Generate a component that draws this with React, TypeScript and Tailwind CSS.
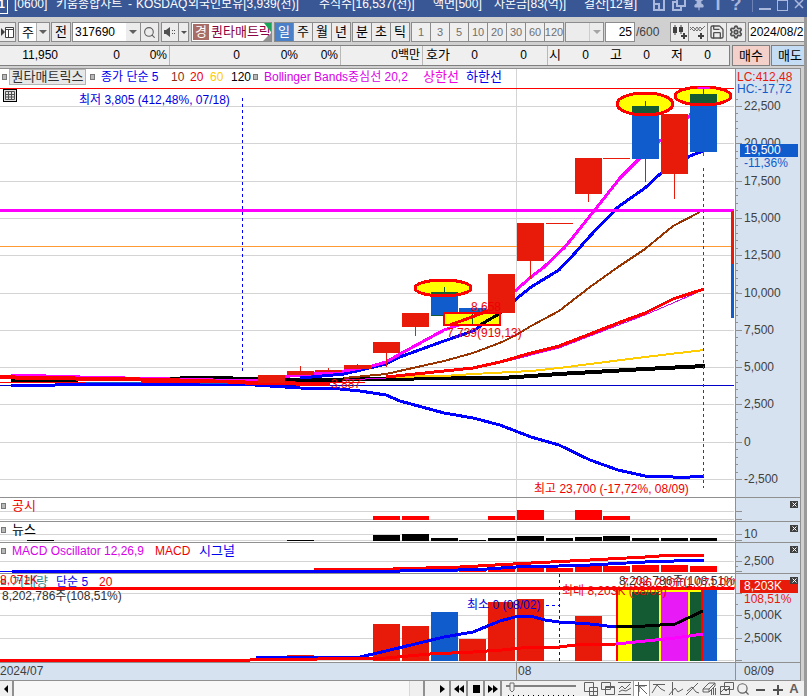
import type { ReactNode } from "react";
import { Search, Save, Settings, Pin } from "lucide-react";

type Point = [number, number];

interface Bar {
  x: number;
  top: number;
  bottom: number;
  color: string;
}

interface Label {
  x: number;
  y: number;
  text: string;
  className: string;
}

interface Tick {
  y: number;
  text?: string;
}

const CHART_WIDTH = 735;
const BAR_WIDTH = 27;
const RED = "#e81a0a";
const BLUE = "#115ccc";
const GREEN = "#145a32";

const toPath = (points: Point[]) => points.map(([x, y]) => `${x},${y}`).join(" ");

const Line = ({ points, color, width = 3 }: { points: Point[]; color: string; width?: number }) => (
  <polyline points={toPath(points)} fill="none" stroke={color} strokeWidth={width} />
);

const Bars = ({ bars }: { bars: Bar[] }) => (
  <>
    {bars.map((b) => (
      <rect key={`${b.x}-${b.top}`} x={b.x} y={b.top} width={BAR_WIDTH} height={b.bottom - b.top} fill={b.color} />
    ))}
  </>
);

const Square = () => <span className="h-[6px] w-[5px] shrink-0 border border-[#777777] bg-[#b8b8b8]" />;

const Down = () => (
  <svg className="pointer-events-none h-1 w-2" viewBox="0 0 8 4">
    <path d="M0 0h8L4 4z" fill="#606060" />
  </svg>
);

interface PanelProps {
  top: number;
  bottom: number;
  grid: number[];
  ticks: Tick[];
  minor?: number[];
  labels?: Label[];
  header?: ReactNode;
  axis?: ReactNode;
  closable?: boolean;
  children: ReactNode;
}

// One horizontal band of the chart: plot on the left, value axis on the right
const Panel = ({ top, bottom, grid, ticks, minor = [], labels = [], header, axis, closable, children }: PanelProps) => {
  const height = bottom - top;
  return (
    <section className="flex border-b border-[#909090]">
      <div className="relative min-w-0 flex-1 overflow-hidden bg-white">
        <svg
          className="block w-full"
          height={height}
          viewBox={`0 ${top} ${CHART_WIDTH} ${height}`}
          preserveAspectRatio="none"
          shapeRendering="crispEdges"
        >
          {grid.map((y) => (
            <path key={y} d={`M0 ${y + 0.5}H734`} stroke="#d4d4d4" />
          ))}
          <path d={`M516.5 ${top}V${bottom}`} stroke="#d4d4d4" />
          {children}
        </svg>
        {header && <div className="absolute top-0 left-0 flex h-4 items-center whitespace-nowrap">{header}</div>}
        {labels.map((l) => (
          <span
            key={l.text + l.x}
            className={`absolute leading-3 whitespace-nowrap ${l.className}`}
            style={{ left: `${(l.x / CHART_WIDTH) * 100}%`, top: l.y - top }}
          >
            {l.text}
          </span>
        ))}
      </div>
      <div className="relative w-[66px] shrink-0 overflow-hidden border-x border-[#909090] bg-[#d6e2f0] text-[#404040]">
        <svg className="block w-full" height={height} viewBox={`0 ${top} 64 ${height}`} shapeRendering="crispEdges">
          {ticks.map((t) => (
            <path key={t.y} d={`M0 ${t.y + 0.5}h6`} stroke="#909090" />
          ))}
          {minor.map((y) => (
            <path key={y} d={`M0 ${y + 0.5}h2`} stroke="#909090" />
          ))}
        </svg>
        {ticks.map((t) =>
          t.text ? (
            <span key={t.y} className="absolute left-2 leading-3" style={{ top: t.y - top - 6 }}>
              {t.text}
            </span>
          ) : null
        )}
        {axis}
        {closable && (
          <button
            type="button"
            aria-label="닫기"
            className="absolute top-[3px] right-[2px] flex h-[7px] w-2 items-center justify-center bg-[#404040]"
          >
            <svg className="h-[5px] w-[5px]" viewBox="0 0 5 5">
              <path d="M0.5 0.5l4 4M4.5 0.5l-4 4" stroke="#ffffff" />
            </svg>
          </button>
        )}
      </div>
    </section>
  );
};

const priceTicks: Tick[] = [
  { y: 106, text: "22,500" },
  { y: 143, text: "20,000" },
  { y: 181, text: "17,500" },
  { y: 218, text: "15,000" },
  { y: 255, text: "12,500" },
  { y: 293, text: "10,000" },
  { y: 330, text: "7,500" },
  { y: 367, text: "5,000" },
  { y: 404, text: "2,500" },
  { y: 442, text: "0" },
  { y: 479, text: "-2,500" },
];

const priceMinor = Array.from({ length: 52 }, (_, i) => Math.round(98.5 + i * 7.46));

const candles: (Bar & { wick?: Point })[] = [
  { x: 258, top: 375, bottom: 383, color: RED },
  { x: 287, top: 371, bottom: 375, color: RED, wick: [366, 375] },
  { x: 315, top: 370, bottom: 372, color: RED, wick: [368, 372] },
  { x: 344, top: 365, bottom: 369, color: RED, wick: [364, 369] },
  { x: 373, top: 342, bottom: 353, color: RED, wick: [342, 367] },
  { x: 402, top: 313, bottom: 327, color: RED, wick: [313, 336] },
  { x: 431, top: 292, bottom: 316, color: BLUE, wick: [286, 316] },
  { x: 459, top: 308, bottom: 313, color: BLUE },
  { x: 488, top: 274, bottom: 313, color: RED },
  { x: 517, top: 223, bottom: 261, color: RED, wick: [223, 279] },
  { x: 546, top: 223, bottom: 224, color: RED },
  { x: 575, top: 158, bottom: 194, color: RED, wick: [158, 202] },
  { x: 603, top: 158, bottom: 159, color: RED },
  { x: 632, top: 106, bottom: 159, color: BLUE, wick: [104, 182] },
  { x: 661, top: 114, bottom: 174, color: RED, wick: [114, 199] },
  { x: 690, top: 94, bottom: 152, color: BLUE, wick: [88, 156] },
];

const upperBand: Point[] = [[11, 375], [80, 377], [170, 379], [256, 381], [270, 378], [300, 375], [344, 371], [372, 366], [386, 362], [400, 354], [444, 330], [459, 325], [488, 311], [515, 291], [531, 277], [544, 267], [565, 247], [590, 216], [598, 206], [620, 178], [645, 153], [660, 141], [690, 116], [703, 88], [710, 88]];
const ma5: Point[] = [[300, 378], [344, 374], [386, 364], [400, 357], [444, 341], [473, 331], [500, 313], [515, 300], [531, 287], [559, 270], [575, 253], [590, 236], [618, 207], [645, 188], [660, 174], [690, 156], [703, 151]];
const ma10: Point[] = [[344, 378], [386, 374], [444, 361], [473, 353], [502, 342], [516, 335], [531, 326], [559, 311], [590, 287], [618, 267], [645, 249], [673, 226], [700, 212]];
const ma20: Point[] = [[386, 377], [444, 371], [473, 368], [500, 362], [531, 353], [559, 346], [590, 334], [618, 323], [645, 313], [673, 299], [704, 289]];
const centerBand: Point[] = [[345, 380], [386, 378], [444, 372], [500, 363], [559, 348], [590, 336], [645, 315], [673, 303], [703, 290]];
const ma60: Point[] = [[386, 377], [444, 376], [473, 374], [531, 371], [559, 368], [590, 364], [645, 357], [704, 350]];
const ma120: Point[] = [[11, 380], [150, 379], [210, 378], [300, 380], [386, 379], [444, 378], [502, 378], [531, 376], [559, 374], [645, 369], [705, 366]];
const lowerBand: Point[] = [[11, 385], [55, 385], [60, 384], [240, 384], [300, 388], [340, 389], [360, 391], [386, 395], [400, 401], [444, 413], [473, 418], [500, 425], [531, 437], [559, 445], [590, 460], [618, 470], [645, 476], [673, 477], [690, 477], [704, 476]];

const highlights = [
  { id: "h1", cx: 443, cy: 288, rx: 28, ry: 8, x: 431, top: 292 },
  { id: "h2", cx: 645, cy: 104, rx: 28, ry: 11, x: 632, top: 106 },
  { id: "h3", cx: 703, cy: 96, rx: 28, ry: 9, x: 690, top: 94 },
];

const PricePanel = () => (
  <Panel
    top={69}
    bottom={497}
    grid={priceTicks.map((t) => t.y)}
    ticks={priceTicks}
    minor={priceMinor}
    labels={[
      { x: 79, y: 94, text: "최저 3,805 (412,48%, 07/18)", className: "text-[#0000dd]" },
      { x: 471, y: 301, text: "8,658", className: "text-[#ee0000]" },
      { x: 447, y: 327, text: "7,739(919,13)", className: "text-[#ee0000]" },
      { x: 331, y: 378, text: "3,887", className: "text-[#ee0000]" },
      { x: 534, y: 483, text: "최고 23,700 (-17,72%, 08/09)", className: "text-[#ee0000]" },
    ]}
    header={
      <div className="flex items-center pl-[2px]">
        <Square />
        <span className="mr-1 ml-[2px] flex h-4 w-[77px] items-center justify-center border border-[#b4b4b4] bg-[#e8e8e8] text-[13px] text-[#303030]">
          퀀타매트릭스
        </span>
        <Square />
        <span className="ml-[6px] w-[70px] text-[#0000ee]">종가 단순 5</span>
        <span className="w-[19px] text-[#8b3010]">10</span>
        <span className="w-5 text-[#ee0000]">20</span>
        <span className="w-[21px] text-[#ffcc00]">60</span>
        <span className="w-[22px] text-black">120</span>
        <Square />
        <span className="ml-[6px] w-[159px] text-[#d800e8]">Bollinger Bands중심선 20,2</span>
        <span className="w-[43px] text-[13px] text-[#f000e0]">상한선</span>
        <span className="text-[13px] text-[#0000ee]">하한선</span>
      </div>
    }
    axis={
      <>
        <span className="absolute top-[2px] left-px leading-3 text-[#e81a0a]">LC:412,48</span>
        <span className="absolute top-[14px] left-px leading-3 text-[#115ccc]">HC:-17,72</span>
        <span className="absolute top-[75px] left-1 h-[13px] w-[58px] bg-[#115ccc] pl-1 leading-[13px] text-white">19,500</span>
        <span className="absolute top-[88px] left-2 leading-3 text-[#115ccc]">-11,36%</span>
      </>
    }
  >
    <path d="M0 88.5H734" stroke="#ff0000" />
    <path d="M0 246.5H734" stroke="#ff9933" />
    <path d="M0 385.5H734" stroke="#0000c8" />
    <path d="M242.5 98V374" stroke="#0000ff" strokeDasharray="3 3" />
    <Line points={ma120} color="#000000" width={4} />
    <Line points={lowerBand} color="#0000ff" />
    <Line points={ma60} color="#ffcc00" width={2} />
    <Line points={ma10} color="#993300" width={2} />
    <Line points={centerBand} color="#d800e8" width={1} />
    <Line points={ma20} color="#ff0000" />
    <Line points={ma5} color="#0000ff" />
    <Line points={upperBand} color="#ff00ff" />
    <Line points={[[0, 377], [30, 378], [120, 379], [200, 381], [260, 383], [330, 384]]} color="#ff0000" width={4} />
    <path d="M0 382.5H365" stroke="#ff0000" />
    <path d="M85 382.5h28M114 382.5h28M200 383.5h28" stroke={BLUE} strokeWidth="1" />
    <path d="M0 210.5H734" stroke="#ff00ff" strokeWidth="3" />
    {candles.map((c) =>
      c.wick ? <path key={c.x} d={`M${c.x + 13.5} ${c.wick[0]}V${c.wick[1]}`} stroke={c.color} /> : null
    )}
    <Bars bars={candles} />
    <rect x="444" y="313" width="56" height="12" fill="#ffff00" />
    <path d="M431 315h13M472.5 314v10" stroke={GREEN} />
    <path d="M450 325L488 311" stroke="#ff0000" strokeWidth="3" />
    <path d="M480 325L499 314" stroke="#000000" strokeWidth="3" />
    <rect x="444" y="313" width="56" height="12" fill="none" stroke="#ff0000" strokeWidth="2" />
    {highlights.map((h) => (
      <g key={h.id}>
        <clipPath id={h.id}>
          <ellipse cx={h.cx} cy={h.cy} rx={h.rx} ry={h.ry} />
        </clipPath>
        <ellipse cx={h.cx} cy={h.cy} rx={h.rx} ry={h.ry} fill="#ffff00" />
        <g clipPath={`url(#${h.id})`}>
          <rect x={h.x} y={h.top} width={BAR_WIDTH} height="30" fill={GREEN} />
          <path d={`M${h.x + 13.5} ${h.top - 5}v5`} stroke={GREEN} />
        </g>
        <ellipse cx={h.cx} cy={h.cy} rx={h.rx} ry={h.ry} fill="none" stroke="#ff0000" strokeWidth="3" />
      </g>
    ))}
    <path d="M697 87.5H710" stroke="#ff00ff" strokeWidth="2" />
    <path d="M703.5 168V488" stroke="#dd0000" strokeDasharray="3 3" />
    <rect x="731" y="211" width="3" height="53" fill={RED} />
    <rect x="731" y="264" width="3" height="54" fill={BLUE} />
  </Panel>
);

const makeBars = (items: Point[], bottom: number, color: string): Bar[] =>
  items.map(([x, top]) => ({ x, top, bottom, color }));

const disclosureBars = makeBars([[373, 516], [402, 516], [488, 516], [517, 510], [575, 510], [603, 516]], 520, "#ff0000");
const newsBars = makeBars(
  [[27, 540], [287, 540], [373, 535], [402, 534], [431, 538], [459, 540], [488, 538], [517, 536], [546, 538], [575, 537], [603, 536], [632, 538], [661, 538], [690, 538]],
  541,
  "#000000"
);
const macdBars = makeBars(
  [[402, 570], [431, 569], [459, 569], [488, 568], [517, 568], [546, 568], [575, 566], [603, 566], [632, 565], [661, 565], [690, 566]],
  572,
  "#ff0000"
);
const volumeBars: Bar[] = [
  ...makeBars([[258, 657], [287, 655], [373, 624], [402, 626], [459, 639], [488, 602], [517, 599], [575, 616]], 661, RED),
  ...makeBars([[431, 612], [690, 590]], 661, BLUE),
];

const PanelTitle = ({ children }: { children: ReactNode }) => (
  <div className="flex items-center pl-px">
    <Square />
    <div className="flex items-center pl-[6px]">{children}</div>
  </div>
);

const LowerPanels = () => (
  <>
    <Panel
      top={498}
      bottom={521}
      grid={[511, 519]}
      ticks={[{ y: 511 }, { y: 519 }]}
      closable
      header={<PanelTitle><span className="text-[13px] text-[#ee0000]">공시</span></PanelTitle>}
    >
      <Bars bars={disclosureBars} />
    </Panel>
    <Panel
      top={522}
      bottom={542}
      grid={[534, 540]}
      ticks={[{ y: 534, text: "10" }, { y: 540 }]}
      closable
      header={<PanelTitle><span className="text-[13px] text-black">뉴스</span></PanelTitle>}
    >
      <Bars bars={newsBars} />
    </Panel>
    <Panel
      top={543}
      bottom={573}
      grid={[561]}
      ticks={[{ y: 561, text: "2,500" }, { y: 571 }]}
      minor={[556, 566]}
      closable
      header={
        <PanelTitle>
          <span className="w-[143px] text-[#d800e8]">MACD Oscillator 12,26,9</span>
          <span className="w-11 text-[#ee0000]">MACD</span>
          <span className="text-[13px] text-[#0000ee]">시그널</span>
        </PanelTitle>
      }
    >
      <Bars bars={macdBars} />
      <path d="M0 571.5H12" stroke="#0000ff" />
      <Line points={[[314, 570], [393, 569], [460, 567], [531, 563], [590, 560], [645, 557], [673, 555], [704, 555]]} color="#ff0000" />
      <Line points={[[12, 571], [400, 571], [458, 570], [487, 569], [516, 567], [559, 566], [590, 565], [645, 562], [704, 560]]} color="#0000ff" />
    </Panel>
    <Panel
      top={574}
      bottom={662}
      grid={[593, 615, 638, 660]}
      ticks={[{ y: 593 }, { y: 615, text: "5,000K" }, { y: 638, text: "2,500K" }, { y: 660 }]}
      minor={[604, 627, 649]}
      closable
      labels={[
        { x: 0, y: 574, text: "8,071K", className: "text-[#ee0000]" },
        { x: 2, y: 590, text: "8,202,786주(108,51%)", className: "text-[#303030]" },
        { x: 467, y: 599, text: "최소 0 (08/02)", className: "text-[#0000dd]" },
        { x: 562, y: 585, text: "최대 8,203K (08/09)", className: "text-[#ee0000]" },
        { x: 619, y: 575, text: "8,202,786주(108,51%)", className: "text-[#303030]" },
        { x: 622, y: 577, text: "7,786,210(01,071,00)", className: "text-[#ee0000]" },
      ]}
      header={
        <PanelTitle>
          <span className="w-11 text-[13px] text-[#30898c]">거래량</span>
          <span className="w-[43px] text-[#0000ee]">단순 5</span>
          <span className="text-[#ee0000]">20</span>
        </PanelTitle>
      }
      axis={
        <>
          <span className="absolute top-[6px] left-1 h-[13px] w-[58px] bg-[#e81a0a] pl-1 leading-[13px] text-white">8,203K</span>
          <span className="absolute top-[19px] left-2 leading-3 text-[#e81a0a]">108,51%</span>
        </>
      }
    >
      <Bars bars={volumeBars} />
      <rect x="617" y="590" width="85" height="71" fill="#ffff00" />
      <rect x="632" y="592" width="27" height="69" fill={GREEN} />
      <rect x="661" y="592" width="27" height="69" fill="#e81af5" />
      <rect x="690" y="592" width="12" height="69" fill={GREEN} />
      <path d="M617 590V661M702 590V661" stroke="#ff0000" strokeWidth="2" />
      <path d="M559.5 574V661M546 605.5H559" stroke="#0000ff" strokeDasharray="3 3" />
      <Line points={[[256, 658], [360, 657], [386, 651], [444, 637], [473, 632], [500, 621], [515, 617], [530, 616], [545, 620], [559, 622], [590, 624], [616, 627]]} color="#0000ff" />
      <Line points={[[616, 627], [645, 626], [675, 624], [703, 611]]} color="#000000" />
      <Line points={[[0, 660], [250, 660], [386, 658], [430, 654], [473, 652], [502, 650], [531, 647], [559, 647], [575, 645], [616, 644]]} color="#ff0000" />
      <Line points={[[616, 644], [645, 641], [675, 638], [703, 634]]} color="#ff00ff" />
      <path d="M0 588.5H734" stroke="#ff0000" strokeWidth="3" />
    </Panel>
  </>
);

const TitleBar = () => (
  <header className="flex h-[17px] items-end overflow-hidden bg-[#3a5795] text-white">
    <div className="flex h-[26px] min-w-0 flex-1 items-center overflow-hidden text-[12px] whitespace-nowrap">
      <span className="mr-[6px] flex h-5 w-2 items-center justify-end border-r border-b border-white pr-[2px] font-bold">1</span>
      <span className="w-[42px]">[0600]</span>
      <span className="w-[72px]">키움종합차트</span>
      <span className="w-[8px]">-</span>
      <span className="w-[52px]">KOSDAQ</span>
      <span className="w-[131px]">외국인보유[3,939(천)]</span>
      <span className="w-[114px]">주식수[16,537(천)]</span>
      <span className="w-[61px]">액면[500]</span>
      <span className="w-[90px]">자본금[83(억)]</span>
      <span>결산[12월]</span>
    </div>
    <div className="flex h-[26px] items-center gap-[6px] pr-[3px] text-[#a9b8dc]">
      <button type="button" aria-label="창 분리">
        <svg className="h-[14px] w-[14px]" viewBox="0 0 14 14" fill="none" stroke="currentColor" strokeWidth="2">
          <path d="M2 3v10h10V1M2 7h5v6" />
        </svg>
      </button>
      <button type="button" aria-label="창 복사">
        <svg className="h-[14px] w-[14px]" viewBox="0 0 14 14" fill="none" stroke="currentColor" strokeWidth="2">
          <path d="M5 1h8v8H5zM5 5H1v8h8V9" />
        </svg>
      </button>
      <button type="button" aria-label="고정"><Pin size={14} fill="currentColor" /></button>
      <button type="button" className="w-3 text-[18px] leading-4 font-bold">T</button>
      <button type="button" className="w-3 text-[18px] leading-4 font-bold">?</button>
      <span className="ml-1 h-4 w-px bg-[#6d83b5]" />
      <button type="button" aria-label="최소화" className="flex h-[14px] w-3 items-end pb-px"><span className="h-[2px] w-full bg-[#a9b8dc]" /></button>
      <button type="button" aria-label="최대화" className="h-[14px] w-[11px] border border-t-4 border-[#a9b8dc]" />
      <button type="button" aria-label="닫기">
        <svg className="h-[10px] w-[10px]" viewBox="0 0 10 10" stroke="currentColor" strokeWidth="1.5">
          <path d="M1 1l8 8M9 1L1 9" />
        </svg>
      </button>
    </div>
  </header>
);

const box = "flex h-5 shrink-0 items-center justify-center border border-[#8c8c8c] bg-[#ececec]";

const ButtonGroup = ({ items, muted, active }: { items: string[]; muted?: boolean; active?: string }) => (
  <div className="mr-px flex shrink-0 border-l border-[#8c8c8c]">
    {items.map((item) => (
      <button
        key={item}
        type="button"
        className={`flex h-5 w-[19px] items-center justify-center border-y border-r border-[#8c8c8c] ${
          item === active
            ? "bg-[#4a80c8] text-[13px] text-white"
            : muted
              ? "bg-[#efefef] text-[11px] text-[#707070]"
              : "bg-[#ececec] text-[13px] text-black"
        }`}
      >
        {item}
      </button>
    ))}
  </div>
);

const Toolbar = () => (
  <div className="flex h-7 items-center overflow-hidden bg-[#d0d0d0] pt-[2px] whitespace-nowrap text-black">
    <button type="button" aria-label="목록" className={`${box} mr-[2px] w-4 border-l-0`}>
      <svg className="h-[13px] w-[14px]" viewBox="0 0 14 13">
        <path d="M0 2l4 4-4 4z" fill="#404040" />
        <path d="M4.5 1.5h8v10h-8zM4.5 3.5h8M7.5 3v8" stroke="#404040" fill="#ffffff" />
      </svg>
    </button>
    <div className={`${box} relative mr-px w-8`}>
      <select aria-label="주기" className="h-full w-full appearance-none bg-white pl-[3px] text-[13px] outline-none">
        <option>주</option>
      </select>
      <span className="pointer-events-none absolute inset-y-0 right-0 flex w-[13px] items-center justify-center border-l border-[#b0b0b0] bg-[#ececec]"><Down /></span>
    </div>
    <button type="button" className={`${box} mr-px w-5 text-[13px]`}>전</button>
    <div className={`${box} w-[69px]`}>
      <input aria-label="종목코드" defaultValue="317690" className="h-full min-w-0 flex-1 bg-white pl-[2px] outline-none" />
      <button type="button" aria-label="종목 목록" className="flex w-[14px] justify-center"><Down /></button>
    </div>
    <button type="button" aria-label="검색" className={`${box} mr-[2px] w-[18px] border-l-0 text-[#606060]`}><Search size={13} /></button>
    <button type="button" aria-label="소리" className={`${box} w-[18px]`}>
      <svg className="h-3 w-3" viewBox="0 0 12 12">
        <path d="M0 4h2l4-3v10L2 8H0zM8 4h1v1H8zM8 7h1v1H8zM10 4h1v1h-1zM10 7h1v1h-1z" fill="#505050" />
      </svg>
    </button>
    <button type="button" aria-label="소리 설정" className={`${box} mr-[2px] w-[10px] border-l-0`}>
      <svg className="h-[3px] w-[6px]" viewBox="0 0 6 3"><path d="M0 0h6L3 3z" fill="#505050" /></svg>
    </button>
    <div className={`${box} relative mr-[2px] w-[81px] justify-start overflow-hidden bg-white pl-px text-[13px]`}>
      <span className="mr-[2px] flex h-4 w-4 shrink-0 items-center justify-center bg-[#aa6c66] text-white">경</span>
      <span className="shrink-0 text-[#8b0040]">퀀타매트릭</span>
      <svg className="absolute top-0 right-0 h-[18px] w-2" viewBox="0 0 8 18">
        <path d="M1 0h7v9z" fill="#18a558" />
        <path d="M8 10v8H0z" fill="#909090" />
      </svg>
    </div>
    <ButtonGroup items={["일", "주", "월", "년"]} active="일" />
    <ButtonGroup items={["분", "초", "틱"]} />
    <ButtonGroup items={["1", "3", "5", "10", "20", "30", "60", "120"]} muted />
    <div className={`${box} relative mr-px w-[39px]`}>
      <select aria-label="틱 단위" className="h-full w-full appearance-none outline-none" />
      <span className="pointer-events-none absolute inset-y-0 right-0 flex w-[14px] items-center justify-center border-l border-[#b0b0b0] opacity-50"><Down /></span>
    </div>
    <input aria-label="표시 개수" defaultValue="25" className="h-5 w-[30px] shrink-0 border border-[#8c8c8c] bg-white pr-[2px] text-right outline-none" />
    <span className="w-[35px] shrink-0 pl-px text-[#404040]">/600</span>
    <button type="button" aria-label="봉 추가" className={`${box} w-[19px]`}>
      <svg className="h-4 w-4" viewBox="0 0 16 16" fill="#404040">
        <path d="M1 3h4v6H1zM2.5 1h1v10h-1zM7 3h4v5H7zM8.500 1h1v9h-1zM9 11h6v2H9zM11 9h2v6h-2z" />
      </svg>
    </button>
    <button type="button" aria-label="지표 추가" className={`${box} w-[19px] border-l-0`}>
      <svg className="h-4 w-4" viewBox="0 0 16 16">
        <path d="M0 6l3-3 4 4 3-4 2 2 3-3M0 3l4 4 3-4 3 4 4-4" fill="none" stroke="#707070" />
        <path d="M8 11h6v2H8zM10 9h2v6h-2z" fill="#404040" />
      </svg>
    </button>
    <button type="button" aria-label="저장" className={`${box} w-[19px] border-l-0 text-[#505050]`}><Save size={16} /></button>
    <button type="button" aria-label="설정" className={`${box} mr-[2px] w-[19px] border-l-0 text-[#505050]`}><Settings size={14} strokeWidth={3} /></button>
    <input aria-label="날짜" defaultValue="2024/08/2" className="h-5 min-w-0 flex-1 border border-r-0 border-[#8c8c8c] bg-white pl-px outline-none" />
  </div>
);

const QuoteBar = () => (
  <div className="flex h-[21px] shrink-0 bg-[#d0d0d0] leading-[18px] text-black">
    <div className="flex min-w-0 flex-1 border border-l-0 border-[#808080] bg-[#efefef] text-right whitespace-nowrap">
      <span className="w-[58px]">11,950</span>
      <span className="w-[62px]">0</span>
      <span className="w-[50px] border-r border-[#b8b8b8] pr-[2px]">0%</span>
      <span className="w-[70px]">0</span>
      <span className="w-[58px]">0%</span>
      <span className="w-[43px] border-r border-[#b8b8b8] pr-[2px]">0%</span>
      <span className="w-[82px] border-r border-[#b8b8b8] pr-[2px]">0백만</span>
      <span className="w-[27px] text-[13px]">호가</span>
      <span className="w-7">0</span>
      <span className="w-[70px] border-r border-[#b8b8b8] pr-5">0</span>
      <span className="w-[13px] text-[13px]">시</span>
      <span className="w-7">0</span>
      <span className="w-[33px] text-[13px]">고</span>
      <span className="w-7">0</span>
      <span className="w-[33px] text-[13px]">저</span>
      <span className="w-7">0</span>
    </div>
    <button type="button" className="ml-[2px] w-[38px] border border-[#808080] bg-[#f4d0cb] text-[13px]">매수</button>
    <button type="button" className="ml-px w-[33px] border border-r-0 border-[#808080] bg-[#c4dcf4] pl-1 text-[13px] whitespace-nowrap">매도</button>
  </div>
);

const transport = [
  { label: "재생", d: "M4 2v8l5-4z" },
  { label: "뒤로", d: "M6 2v8L1 6zM11 2v8L6 6z" },
  { label: "정지", d: "M3 2h7v8H3z" },
  { label: "앞으로", d: "M1 2v8l5-4zM6 2v8l5-4z" },
];

const tools = [
  { label: "추가", d: "M1.500 1.500h9v9h-9zM6.500 6.500h8v8h-8zM10.500 7v7M7 10.500h7" },
  { label: "겹치기", d: "M1.500 1.500h9v7h-9zM5.500 5.500h9v8h-9zM5 6.500h9" },
  { label: "범위", d: "M1 1.500h13M1 13.500h13M2 8l3-3 3 3 5-5M2 11l3-2 4 1 5-3" },
  { label: "커서", d: "M1 4.500h12M4.500 1v14M5 5l8 8M5 5h6M5 5v6" },
  { label: "추세선", d: "M2 3.500h12M1 12l5-8 4 4 4 2" },
  { label: "수직선", d: "M4.500 1v13M1 14l6-7 3 4 5-3" },
  { label: "사선", d: "M1 14L13 2M2 10l5-4 4 5 3 1" },
  { label: "지우개", d: "M1 8l6-6h6v3L7 11H1zM1 8h6l6-6M7 8v3M9.500 14V9M11.500 14V7M13.500 14V7" },
  { label: "복사", d: "M5.500 1.500h9v7h-9zM1.500 5.500h9v8h-9zM2 11l3-3 2 2 3-3" },
];

const BottomBar = () => (
  <footer className="flex h-[15px] items-start overflow-hidden bg-[#f0f0f0] text-[#606060]">
    <button type="button" aria-label="왼쪽" className="flex h-4 w-[14px] shrink-0 items-center justify-center border-r-2 border-[#909090]">
      <svg className="h-2 w-1" viewBox="0 0 4 8"><path d="M4 0v8L0 4z" fill="#000000" /></svg>
    </button>
    <div className="h-4 min-w-0 flex-1 bg-[#f8f8f8]" />
    <span className="mr-[9px] h-4 w-4 shrink-0 border-r-2 border-l border-[#909090] border-l-[#d8d8d8]" />
    {transport.map((t) => (
      <button key={t.label} type="button" aria-label={t.label} className="flex h-4 w-[17px] shrink-0 items-center justify-center border-r-2 border-[#909090]">
        <svg className="h-3 w-3" viewBox="0 0 12 12"><path d={t.d} fill="#000000" /></svg>
      </button>
    ))}
    <svg className="ml-1 h-[15px] w-[72px] shrink-0" viewBox="0 0 72 15">
      <path d="M0 5h70" stroke="#808080" strokeWidth="2" />
      <path d="M4 2h4v7l-2 2-2-2z" fill="#efefef" stroke="#707070" />
      <path d="M2 14.5h68" stroke="#000000" strokeDasharray="1 4" />
    </svg>
    <div className="ml-[5px] flex shrink-0 items-center gap-[2px] pr-1">
      {tools.map((t) => (
        <button key={t.label} type="button" aria-label={t.label} className={t.label === "커서" ? "bg-white outline outline-[#a0a0a0]" : ""}>
          <svg className="block h-[15px] w-[15px]" viewBox="0 0 15 15" fill="none" stroke="currentColor">
            <path d={t.d} />
          </svg>
        </button>
      ))}
      <button type="button" aria-label="확대경"><Search size={14} /></button>
      <button type="button" aria-label="축소">
        <svg className="block h-[14px] w-4" viewBox="0 0 16 14"><path d="M4 8h9" stroke="#505050" strokeWidth="2" /></svg>
      </button>
      <button type="button" aria-label="확대">
        <svg className="block h-[14px] w-4" viewBox="0 0 16 14"><path d="M3 8h10M8 3v10" stroke="#505050" strokeWidth="2" /></svg>
      </button>
      <button type="button" className="w-3 pt-px text-[13px] leading-[14px] font-bold">A</button>
    </div>
  </footer>
);

export default function App() {
  return (
    <div className="w-full overflow-hidden bg-[#d0d0d0] font-['Liberation_Sans','Noto_Sans_CJK_KR',sans-serif] text-[12px]">
      <TitleBar />
      <div className="border-r-[3px] border-[#9a9a9a]">
        <Toolbar />
        <QuoteBar />
        <main className="mt-[2px] mr-[3px] border-t border-[#909090]">
          <div className="relative">
            <PricePanel />
            <button type="button" aria-label="표" className="absolute top-5 left-[3px] flex h-[13px] w-[14px] items-center justify-center border border-black bg-[#e0e0e0]">
              <svg className="h-[9px] w-[10px]" viewBox="0 0 10 9" fill="none" stroke="#505050">
                <path d="M0.5 0.5h9v8h-9zM0 3.500h10M0 6h10M3.500 0v9M6.500 0v9" />
              </svg>
            </button>
          </div>
          <LowerPanels />
          <div className="flex h-[18px] border-b border-[#909090] bg-[#d6e2f0] leading-4 text-[#404040]">
            <div className="flex min-w-0 flex-1">
              <span className="w-[70.2%]">2024/07</span>
              <span className="border-l border-[#909090] pl-px">08</span>
            </div>
            <span className="w-[66px] border-x border-[#909090] pl-2">08/09</span>
          </div>
        </main>
        <BottomBar />
      </div>
    </div>
  );
}
